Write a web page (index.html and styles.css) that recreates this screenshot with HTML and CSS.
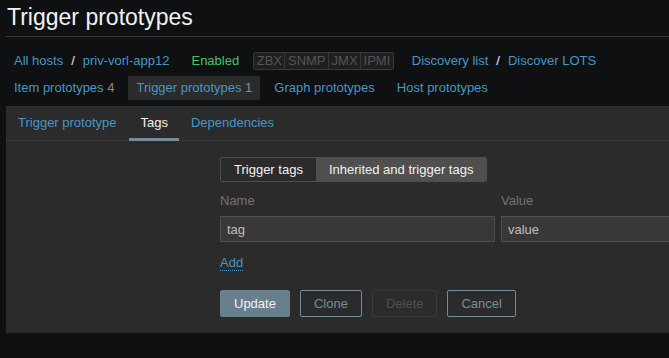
FILE: index.html
```html
<!DOCTYPE html>
<html lang="en">
<head>
<meta charset="utf-8">
<title>Trigger prototypes</title>
<link rel="stylesheet" href="styles.css">
</head>
<body>
<header class="page-header">
  <h1 class="page-title">Trigger prototypes</h1>
</header>
<nav class="context-nav">
  <ul class="nav-row">
    <li class="crumbs"><a href="#">All hosts</a><span class="sep">/</span><a href="#">priv-vorl-app12</a></li>
    <li class="status-enabled">Enabled</li>
    <li class="status-box"><span>ZBX</span><span>SNMP</span><span>JMX</span><span>IPMI</span></li>
    <li class="crumbs crumbs-discovery"><a href="#">Discovery list</a><span class="sep">/</span><a href="#">Discover LOTS</a></li>
  </ul>
  <ul class="nav-row nav-entities">
    <li><a href="#">Item prototypes</a> <span class="count">4</span></li>
    <li class="selected"><a href="#">Trigger prototypes</a> <span class="count">1</span></li>
    <li><a href="#">Graph prototypes</a></li>
    <li><a href="#">Host prototypes</a></li>
  </ul>
</nav>
<main class="panel">
  <ul class="tabs">
    <li><a href="#">Trigger prototype</a></li>
    <li class="active"><a href="#">Tags</a></li>
    <li><a href="#">Dependencies</a></li>
  </ul>
  <form class="form-grid">
    <div class="form-label"></div>
    <div class="form-field">
      <div class="radio-group">
        <span class="seg seg-checked">Trigger tags</span><span class="seg">Inherited and trigger tags</span>
      </div>
      <div class="tags-table">
        <div class="th">Name</div>
        <div class="th">Value</div>
        <input class="tag-input" type="text" value="tag">
        <input class="tag-input" type="text" value="value">
      </div>
      <div class="add-row"><a href="#" class="link-dotted">Add</a></div>
      <div class="buttons">
        <button type="button" class="btn btn-main">Update</button>
        <button type="button" class="btn btn-alt">Clone</button>
        <button type="button" class="btn btn-disabled">Delete</button>
        <button type="button" class="btn btn-alt">Cancel</button>
      </div>
    </div>
  </form>
</main>
</body>
</html>
```

FILE: styles.css
```css
* { box-sizing: border-box; }
html, body { margin: 0; padding: 0; }
body {
  background: #0e1012;
  color: #f2f2f2;
  font-family: "Liberation Sans", Arial, sans-serif;
  font-size: 13px;
  overflow: hidden;
}
a { color: #4796c4; text-decoration: none; }
ul { list-style: none; margin: 0; padding: 0; }

.page-header {
  margin-left: 6px;
  padding: 4px 0 6px;
  border-bottom: 1px solid #383838;
}
.page-title {
  margin: 0;
  font-size: 23px;
  line-height: 26px;
  font-weight: normal;
  color: #f2f2f2;
  padding-left: 1px;
}

.context-nav {
  padding-top: 12px;
  margin-left: 6px;
  display: flex;
  flex-direction: column;
  gap: 3px;
}
.nav-row {
  display: flex;
  align-items: center;
  height: 24px;
  line-height: 24px;
}
.crumbs { padding-left: 8px; }
.sep { color: #f2f2f2; margin: 0 8px; }
.status-enabled { color: #4ac166; margin-left: 22px; }
.status-box {
  display: flex;
  margin-left: 14px;
  height: 18px;
  line-height: 16px;
  border: 1px solid #383838;
  border-radius: 2px;
  background: #1f1f1f;
  color: #555555;
}
.status-box span { padding: 0 2.5px; }
.status-box span + span { border-left: 1px solid #383838; }
.crumbs-discovery { margin-left: 10px; }

.nav-entities { gap: 6px; }
.nav-entities li { padding: 0 8px; border-radius: 2px; }
.nav-entities li.selected { background: #2b2b2b; }
.count { color: #8a8a8a; }

.panel {
  margin: 6px 0 0 6px;
  background: #2b2b2b;
  overflow: hidden;
  padding-bottom: 16px;
}
.tabs {
  display: flex;
  border-bottom: 1px solid #383838;
  height: 35px;
}
.tabs li {
  height: 35px;
  margin-bottom: -1px;
  line-height: 34px;
  padding: 0 12px;
}
.tabs li.active { padding: 0 11px 0 12px; box-shadow: inset 0 -3px 0 #768d99; }
.tabs li.active a { color: #f2f2f2; }

.form-grid {
  display: grid;
  grid-template-columns: 214px 1fr;
  padding-top: 16px;
}

.radio-group {
  display: inline-flex;
  border: 1px solid #4f4f4f;
  border-radius: 2px;
  height: 25px;
  line-height: 23px;
  overflow: hidden;
}
.seg { padding: 0 13px; color: #f2f2f2; background: #4f4f4f; }
.seg-checked { background: #2b2b2b; }

.tags-table {
  display: grid;
  grid-template-columns: 275px 275px;
  column-gap: 6px;
  row-gap: 7px;
  margin-top: 11px;
}
.th { color: #737373; line-height: 16px; }
.tag-input {
  height: 26px;
  border: 1px solid #4f4f4f;
  background: #383838;
  color: #bfbfbf;
  font: inherit;
  padding: 0 6px;
  margin: 0;
  outline: none;
}

.add-row { margin-top: 13px; line-height: 16px; }
.link-dotted { border-bottom: 1px dotted #4796c4; }

.buttons { display: flex; gap: 10px; margin-top: 19px; }
.btn {
  height: 27px;
  padding: 0 13px;
  font: inherit;
  border: 1px solid #768d99;
  border-radius: 2px;
  background: transparent;
  color: #768d99;
}
.btn-main { background: #687f8e; border-color: #687f8e; color: #f2f2f2; }
.btn-disabled { border-color: #383838; color: #4f4f4f; }
```
